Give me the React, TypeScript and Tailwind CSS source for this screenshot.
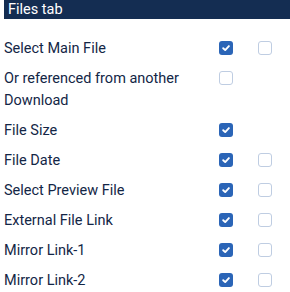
import React from "react";

type Row = { label: string; main: boolean; mirror?: boolean };

const rows: Row[] = [
  { label: "Select Main File", main: true, mirror: false },
  { label: "Or referenced from another Download", main: false },
  { label: "File Size", main: true },
  { label: "File Date", main: true, mirror: false },
  { label: "Select Preview File", main: true, mirror: false },
  { label: "External File Link", main: true, mirror: false },
  { label: "Mirror Link-1", main: true, mirror: false },
  { label: "Mirror Link-2", main: true, mirror: false },
];

function Box({ checked }: { checked: boolean }) {
  if (checked) {
    return (
      <span className="mt-[3px] flex h-[14px] w-[14px] items-center justify-center rounded-[3px] bg-[#2b65b7]">
        <svg width="10" height="10" viewBox="0 0 10 10" fill="none">
          <path d="M2.2 5.2 L4.2 7.1 L7.9 3.1" stroke="#fff" strokeWidth="1.9" strokeLinecap="round" strokeLinejoin="round" />
        </svg>
      </span>
    );
  }
  return <span className="mt-[3px] block h-[14px] w-[14px] rounded-[3px] border border-[#bfcde2] bg-white" />;
}

export default function App() {
  return (
    <div className="h-[292px] w-[290px] overflow-hidden bg-white font-['Roboto',sans-serif] text-[14.5px] text-[#132646]">
      <div className="ml-1 h-[19px] bg-[#142d52] pl-1 leading-[19px] text-white">Files tab</div>
      <div className="mt-[19px] flex flex-col gap-2 pl-1">
        {rows.map((r) => (
          <div key={r.label} className="grid grid-cols-[215px_39px_1fr] items-start">
            <span className={r.label.startsWith("Or") ? "w-[195px] leading-[22px]" : "leading-[22px]"}>{r.label}</span>
            <Box checked={r.main} />
            {r.mirror !== undefined ? <Box checked={r.mirror} /> : <span />}
          </div>
        ))}
      </div>
    </div>
  );
}
